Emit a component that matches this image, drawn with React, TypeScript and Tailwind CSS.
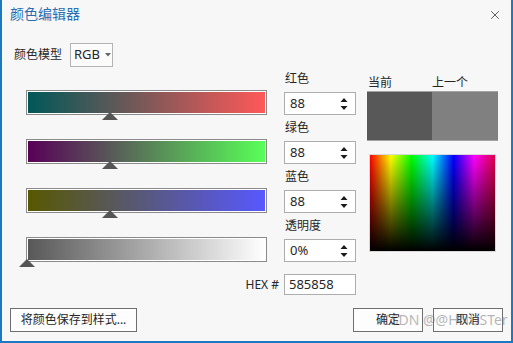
import { X } from "lucide-react";

const sliders = [
  { from: "#005858", to: "#ff5858", value: 88 },
  { from: "#580058", to: "#58ff58", value: 88 },
  { from: "#585800", to: "#5858ff", value: 88 },
  { from: "#585858", to: "#ffffff", value: 0 },
];

const fields = [
  { label: "红色", value: "88" },
  { label: "绿色", value: "88" },
  { label: "蓝色", value: "88" },
  { label: "透明度", value: "0%" },
];

const Spinner = () => (
  <svg width="8" height="14" viewBox="0 0 8 14" className="text-[#1a1a1a]">
    <path d="M4 1 L7.5 5 L0.5 5 Z" fill="currentColor" />
    <path d="M0.5 9 L7.5 9 L4 13 Z" fill="currentColor" />
  </svg>
);

const App = () => {
  return (
    <div className="relative w-[513px] h-[343px] bg-[#f7f7f7] border-x-2 border-b-2 border-[#1b78c1] flex flex-col text-[12px] text-[#262626] font-['Noto_Sans','Noto_Sans_CJK_SC',sans-serif] overflow-hidden">
      {/* title bar */}
      <div className="h-[26px] pl-[8px] pr-[9px] flex items-center justify-between">
        <span className="text-[14px] text-[#2a6db3]">颜色编辑器</span>
        <X size={14} strokeWidth={1.6} className="mt-[4px] text-[#555]" />
      </div>

      {/* color model */}
      <div className="mt-[17px] pl-[12px] flex items-center gap-[8px]">
        <span>颜色模型</span>
        <div className="w-[43px] h-[24px] border border-[#b4b4b4] bg-[#fbfbfb] flex items-center pl-[3px] gap-[5px] text-[13px]">
          <span>RGB</span>
          <svg width="6" height="4" viewBox="0 0 6 4">
            <path d="M0 0 L6 0 L3 3.5 Z" fill="#666" />
          </svg>
        </div>
      </div>

      {/* body */}
      <div className="flex">
        {/* sliders */}
        <div className="pl-[24px] pt-[23px] w-[265px] flex flex-col gap-[24px]">
          {sliders.map((s, i) => (
            <div key={i} className="relative w-[241px] h-[25px] border border-[#8a8a8a] p-[1px] bg-white">
              <div
                className="w-full h-full"
                style={{ background: `linear-gradient(to right, ${s.from}, ${s.to})` }}
              />
              <svg
                width="16"
                height="8"
                viewBox="0 0 16 8"
                className="absolute top-[21px]"
                style={{ left: `${(s.value / 255) * 241 - 8}px` }}
              >
                <path d="M8 0 L16 8 L0 8 Z" fill="#555" />
              </svg>
            </div>
          ))}
        </div>

        {/* numeric fields */}
        <div className="ml-[17px] pt-[4px] w-[72px] flex flex-col">
          {fields.map((f) => (
            <div key={f.label} className="flex flex-col mb-[5px]">
              <span className="leading-[16px] pl-[1px]">{f.label}</span>
              <div className="mt-[5px] h-[23px] border border-[#adadad] bg-white flex items-center justify-between pl-[5px] pr-[7px] text-[13px]">
                <span>{f.value}</span>
                <Spinner />
              </div>
            </div>
          ))}
          <div className="mt-[7px] -ml-[40px] flex items-center gap-[5px]">
            <span className="w-[35px] text-right text-[12px]">HEX #</span>
            <div className="w-[72px] h-[21px] border border-[#adadad] bg-white flex items-center pl-[4px] text-[13px]">
              585858
            </div>
          </div>
        </div>

        {/* preview */}
        <div className="ml-[11px] pt-[8px] w-[131px] flex flex-col">
          <div className="flex leading-[16px]">
            <span className="w-[65px] pl-[1px]">当前</span>
            <span>上一个</span>
          </div>
          <div className="h-[50px] flex border-t border-b border-[#a3a3a3]">
            <div className="w-[65px] bg-[#585858]" />
            <div className="flex-1 bg-[#808080]" />
          </div>
          <div className="mt-[13px] ml-[2px] w-[127px] h-[98px] border border-[#d8d8d8] bg-[linear-gradient(to_bottom,rgba(0,0,0,0),#000),linear-gradient(to_right,#f00,#ff0,#0f0,#0ff,#00f,#f0f,#e0004a)]" />
        </div>
      </div>

      {/* footer */}
      <div className="mt-auto pb-[9px] px-[8px] flex items-center">
        <button className="w-[127px] h-[24px] border border-[#6e6e6e] bg-[#fdfdfd] text-[12px]">
          将颜色保存到样式...
        </button>
        <div className="ml-auto flex gap-[10px]">
          <button className="w-[70px] h-[24px] border border-[#6e6e6e] bg-[#fdfdfd] text-[12px]">确定</button>
          <button className="w-[70px] h-[24px] border border-[#6e6e6e] bg-[#fdfdfd] text-[12px]">取消</button>
        </div>
      </div>

      {/* watermark */}
      <span className="absolute z-10 left-[380px] top-[312px] whitespace-nowrap text-[14px] leading-[16px] text-[rgba(110,110,110,0.5)] pointer-events-none">
        CSDN @@HNUSTer
      </span>
    </div>
  );
};

export default App;
